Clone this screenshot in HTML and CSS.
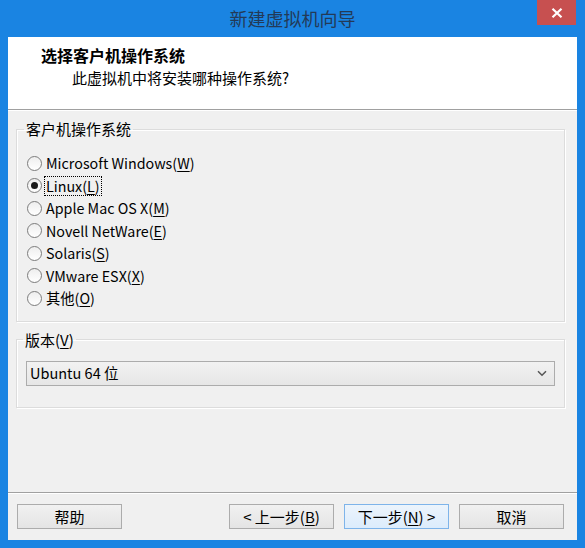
FILE: index.html
```html
<!DOCTYPE html>
<html lang="zh-CN">
<head>
<meta charset="utf-8">
<title>新建虚拟机向导</title>
<link rel="stylesheet" href="styles.css">
</head>
<body>
<div class="window">
  <div class="titlebar">
    <span class="title">新建虚拟机向导</span>
    <button class="close" type="button" aria-label="关闭">
      <svg width="12" height="10" viewBox="0 0 12 10"><path d="M1.5 0.8 L10.5 9.2 M10.5 0.8 L1.5 9.2" stroke="#fff" stroke-width="2.2" fill="none"/></svg>
    </button>
  </div>
  <div class="client">
    <div class="header">
      <h1>选择客户机操作系统</h1>
      <p>此虚拟机中将安装哪种操作系统?</p>
    </div>
    <div class="body">
      <fieldset class="group os">
        <legend>客户机操作系统</legend>
        <label class="radio"><span class="dot"></span><span class="txt">Microsoft Windows(<u>W</u>)</span></label>
        <label class="radio checked"><span class="dot"></span><span class="txt focus">Linux(<u>L</u>)</span></label>
        <label class="radio"><span class="dot"></span><span class="txt">Apple Mac OS X(<u>M</u>)</span></label>
        <label class="radio"><span class="dot"></span><span class="txt">Novell NetWare(<u>E</u>)</span></label>
        <label class="radio"><span class="dot"></span><span class="txt">Solaris(<u>S</u>)</span></label>
        <label class="radio"><span class="dot"></span><span class="txt">VMware ESX(<u>X</u>)</span></label>
        <label class="radio"><span class="dot"></span><span class="txt">其他(<u>O</u>)</span></label>
      </fieldset>
      <fieldset class="group ver">
        <legend>版本(<u>V</u>)</legend>
        <div class="select">
          <span>Ubuntu 64 位</span>
          <svg class="chev" width="10" height="7" viewBox="0 0 10 7"><path d="M1 1.2 L5 5.2 L9 1.2" stroke="#555" stroke-width="1.5" fill="none"/></svg>
        </div>
      </fieldset>
    </div>
    <div class="footer">
      <button class="btn" type="button">帮助</button>
      <span class="spacer"></span>
      <button class="btn" type="button">&lt; 上一步(<u>B</u>)</button>
      <button class="btn default" type="button">下一步(<u>N</u>) &gt;</button>
      <button class="btn" type="button">取消</button>
    </div>
  </div>
</div>
</body>
</html>
```
FILE: styles.css
```css
* { box-sizing: border-box; }

html, body {
  margin: 0;
  padding: 0;
}

body {
  width: 585px;
  height: 548px;
  overflow: hidden;
  font-family: "Noto Sans CJK SC", "Noto Sans", sans-serif;
  font-size: 15px;
  color: #000;
}

.window {
  width: 585px;
  height: 548px;
  background: #1a84e2;
  padding: 0 8px 8px 8px;
  display: flex;
  flex-direction: column;
}

.titlebar {
  height: 37px;
  display: flex;
  align-items: flex-start;
  justify-content: center;
  position: relative;
}

.title {
  font-size: 18px;
  line-height: 36px;
  color: #233a57;
}

.close {
  position: absolute;
  top: 0;
  right: 1px;
  width: 39px;
  height: 25px;
  border: 0;
  padding: 0;
  background: #c75050;
  display: flex;
  align-items: center;
  justify-content: center;
}

.client {
  flex: 1;
  background: #f0f0f0;
  display: flex;
  flex-direction: column;
}

.header {
  height: 73px;
  background: #fff;
  border-bottom: 1px solid #a0a0a0;
  box-shadow: 0 1px 0 #fff;
  padding: 8px 0 0 33px;
}

.header h1 {
  margin: 0;
  font-size: 16px;
  font-weight: bold;
  line-height: 20px;
}

.header p {
  margin: 3px 0 0 31px;
  font-size: 15px;
  line-height: 20px;
}

.body {
  flex: 1;
  padding: 10px 12px 0 8px;
  display: flex;
  flex-direction: column;
}

.group {
  margin: 0;
  border: 1px solid #dcdcdc;
  box-shadow: inset 1px 1px 0 #fff, 1px 1px 0 #fff;
  min-width: 0;
}

.group legend {
  padding: 0 2px;
  margin-left: -3px;
  line-height: 18px;
  font-size: 15px;
}

.os {
  padding: 14px 10px 11px 10px;
}

.radio {
  display: flex;
  align-items: center;
  height: 22.5px;
  font-size: 14.3px;
}

.dot {
  width: 15px;
  height: 15px;
  border-radius: 50%;
  border: 1px solid #7c7c7c;
  background: linear-gradient(#eeeeee, #ffffff);
  margin-right: 4px;
  flex: none;
  display: flex;
  align-items: center;
  justify-content: center;
}

.checked .dot::after {
  content: "";
  width: 7px;
  height: 7px;
  border-radius: 50%;
  background: #1a1a1a;
}

.txt {
  line-height: 18px;
  padding: 0 1px;
  border: 1px solid transparent;
  margin-left: -2px;
}

.txt.focus {
  border: 1px dotted #000;
}

.ver {
  margin-top: 9px;
  padding: 12px 9px 21px 9px;
}

.select {
  height: 25px;
  border: 1px solid #acacac;
  background: linear-gradient(#f2f2f2, #e6e6e6);
  display: flex;
  align-items: center;
  justify-content: space-between;
  padding: 0 7px 0 3px;
  line-height: 20px;
  font-size: 14.5px;
}

.footer {
  height: 48px;
  border-top: 1px solid #a0a0a0;
  box-shadow: inset 0 1px 0 #fff;
  display: flex;
  align-items: flex-start;
  padding: 11px 13px 0 9px;
  gap: 10px;
}

.spacer { flex: 1; }

.btn {
  width: 105px;
  height: 25px;
  border: 1px solid #acacac;
  background: linear-gradient(#f1f1f1, #e4e4e4);
  font-family: inherit;
  font-size: 15px;
  line-height: 20px;
  color: #000;
  padding: 0;
}

.btn.default {
  border-color: #7eb4ea;
  background: linear-gradient(#ecf4fc, #dcecfc);
}

u { text-decoration: underline; text-underline-offset: 2px; }
```
